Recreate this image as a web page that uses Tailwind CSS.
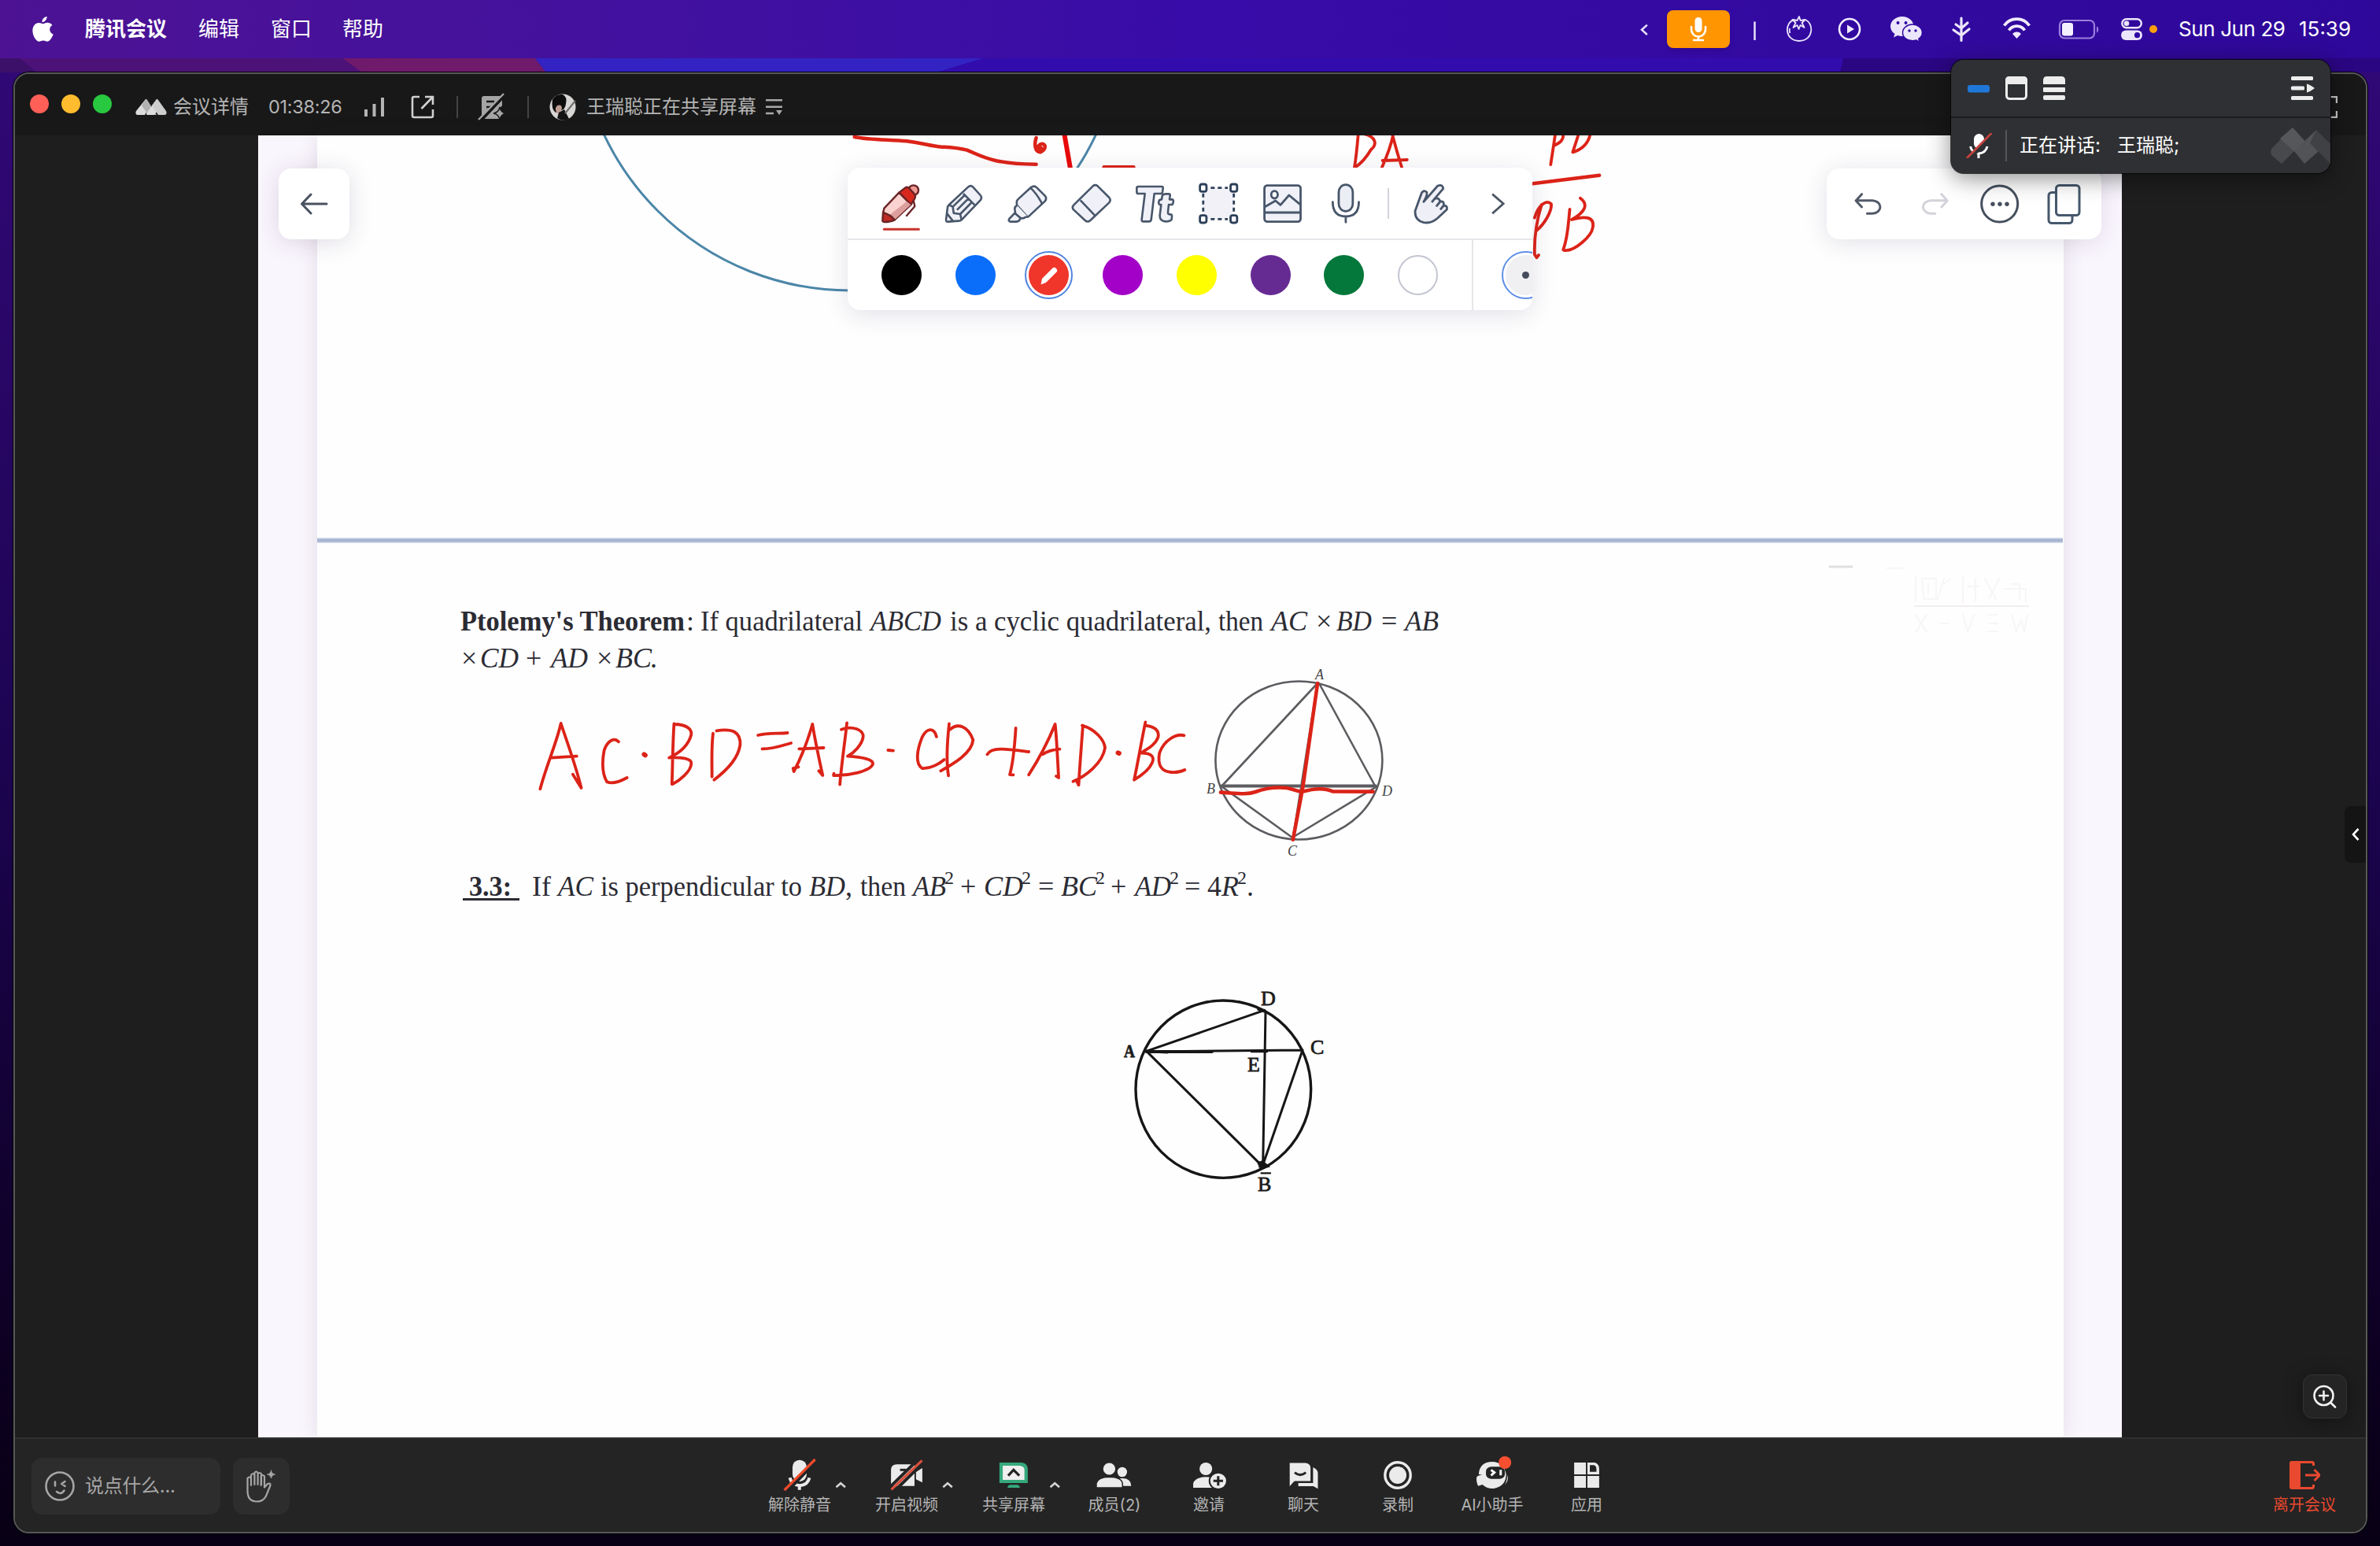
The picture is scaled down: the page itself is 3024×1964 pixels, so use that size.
<!DOCTYPE html>
<html lang="zh-CN">
<head>
<meta charset="utf-8">
<title>腾讯会议</title>
<script src="https://cdn.jsdelivr.net/npm/@tailwindcss/browser@4"></script>
</head>
<body class="relative flex h-[1964px] w-[3024px] flex-col overflow-hidden bg-linear-to-b from-[#33097a] via-[#1c0450] to-[#080014] font-['Inter','Noto_Sans_CJK_SC',sans-serif]">

<!-- Menu bar -->
<header class="flex h-[74px] shrink-0 items-center bg-linear-to-r from-[#4d1294] via-[#380ca8] to-[#2e0899] pl-[41px] text-[26px] leading-none text-white">
  <svg class="h-[33px] w-[27px]" viewBox="0 0 27 33" fill="#fff"><path d="M18.600 0c.3 3.600-2.700 7.300-6.100 7.100C12.100 3.600 15.300.3 18.600 0zM13.700 9.200c1.300 0 3.300-1.600 6-1.400 2.300.1 4.400 1.200 5.700 3.100-4.800 3-4 9.600 1.300 11.600-1 3.200-4.300 9.300-7.700 9.300-2 0-2.700-1.200-5.100-1.200s-3.200 1.200-5.100 1.200C4.700 31.800.5 24.400.4 18.300.3 11.900 4.200 8 8.300 8c2.300 0 4 1.200 5.400 1.200z"/></svg>
  <span class="ml-10 w-[104px] whitespace-nowrap font-bold">腾讯会议</span>
  <span class="ml-10 w-[52px]">编辑</span>
  <span class="ml-10 w-[52px]">窗口</span>
  <span class="ml-[39px] w-[52px]">帮助</span>
  <div class="ml-auto flex h-[74px] w-[954px] items-center [&_svg_*]:[vector-effect:non-scaling-stroke]">
    <svg class="h-[74px] w-[48px]" viewBox="32.200 0 77.300 222" preserveAspectRatio="none" fill="none" stroke="#e9e2fb" stroke-width="2.500"><path d="M69 95L58 113.500L69 132"/></svg>
    <div class="h-12 w-20 rounded-lg bg-[#ff9500] shadow-md">
      <svg class="h-12 w-20" viewBox="0 0 80 48" fill="none" stroke="#fff" stroke-width="2.600" stroke-linecap="round"><rect x="35.500" y="9" width="9" height="19" rx="4.500" fill="#fff" stroke="none"/><path d="M31 21v3.500a9 9 0 0 0 18 0V21M40 33.500V38M34 38h12"/></svg>
    </div>
    <svg class="h-[74px] w-[62px]" viewBox="0 0 62 74"><path d="M31.500 27.500v23.500" stroke="#e9e2fb" stroke-width="2.500"/></svg>
    <svg class="h-[74px] w-[60px]" viewBox="0 0 60 74" fill="none" stroke="#e9e2fb" stroke-width="1.800" stroke-linejoin="round"><path d="M20 25C7 28 7 52 26 52C45 52 45 28 33 25"/><path d="M26 21l1.500 5 6-1-4 4 3 6-5-3-2 5-2-5-5 3 3-6-4-4 6 1z"/><path d="M14 36c-.5 2-.4 4 .3 6"/></svg>
    <svg class="h-[74px] w-[60px]" viewBox="0 0 60 74" fill="none" stroke="#f1ecfd" stroke-width="2.600"><circle cx="30" cy="37" r="13"/><path d="M27 31.500v11l9-5.500z" fill="#f1ecfd" stroke="none"/></svg>
    <svg class="h-[74px] w-[80px]" viewBox="0 0 80 74"><path d="M37 21c-8.500 0-15 5.600-15 12.500 0 4 2.200 7.300 5.500 9.600L26 47.500l5-2.500c2 .6 4 .9 6 .9 8 0 14.500-5.600 14.500-12.400S45 21 37 21z" fill="#ece6fc"/><circle cx="31.500" cy="29" r="2" fill="#3009a2"/><circle cx="41.500" cy="29" r="2" fill="#3009a2"/><path d="M50 31c-7 0-12.500 4.700-12.500 10.400S43 51.800 50 51.800c1.700 0 3.300-.3 4.800-.8l4.200 2.300-1.200-4c2.800-1.900 4.600-4.700 4.600-7.900C62.400 35.700 57 31 50 31z" fill="#ece6fc" stroke="#3009a2" stroke-width="1.500"/><circle cx="46" cy="39" r="1.700" fill="#3009a2"/><circle cx="54" cy="39" r="1.700" fill="#3009a2"/></svg>
    <svg class="h-[74px] w-[70px]" viewBox="0 0 70 74" fill="none" stroke="#ece6fc" stroke-width="3.200" stroke-linecap="round"><path d="M32 23v28.500M32 36l8-7M32 36l-7-5M32 45l10-8M32 45l-10-7"/></svg>
    <svg class="h-[74px] w-[70px]" viewBox="0 0 70 74" fill="none" stroke="#f1ecfd" stroke-width="3.800"><path d="M16.500 32.500a19.500 19.500 0 0 1 32 0M22.500 38.500a12 12 0 0 1 20 0"/><path d="M32.500 49l-5.500-6a7.500 7.500 0 0 1 11 0z" fill="#f1ecfd" stroke="none"/></svg>
    <svg class="h-[74px] w-[80px]" viewBox="0 0 80 74"><rect x="17" y="26" width="44" height="22.500" rx="6" fill="none" stroke="#9c80dd" stroke-width="2.200"/><rect x="20" y="29" width="14" height="16.500" rx="3" fill="#f4f0fe"/><path d="M64 33.500c3 1 3 7 0 8z" fill="#9c80dd"/></svg>
    <svg class="h-[74px] w-[80px]" viewBox="0 0 80 74"><rect x="16.300" y="24.300" width="24.500" height="11" rx="5.500" fill="none" stroke="#ece6fc" stroke-width="2.400"/><circle cx="22" cy="29.800" r="3.300" fill="#ece6fc"/><rect x="15" y="38.500" width="27" height="12.500" rx="6.200" fill="#ece6fc"/><circle cx="35.500" cy="44.700" r="3.600" fill="#3009a2"/><circle cx="56" cy="37" r="5" fill="#ff9f0a"/></svg>
    <span class="ml-[8px] w-[137px] whitespace-nowrap tracking-[-.4px]">Sun Jun 29</span><span class="ml-4 whitespace-nowrap">15:39</span>
  </div>
</header>

<!-- Wallpaper strip below the menu bar -->
<svg class="block h-[18px] w-full shrink-0" viewBox="0 74 3024 18"><rect y="74" width="3024" height="18" fill="#2e0a9a"/><path d="M0 74h25l22 18H0z" fill="#3c1068"/><path d="M25 74h410l25 18H47z" fill="#4d1278"/><path d="M435 74h245l14 18H460z" fill="#701a6c"/><path d="M680 74h570l-60 18H694z" fill="#3323c2"/><path d="M1250 74h1092l-4 18H1190z" fill="#320cac"/><path d="M2342 74h682v18h-686z" fill="#2b0683"/></svg>

<!-- Meeting window -->
<main class="ml-[17px] flex h-[1856px] w-[2991px] shrink-0 flex-col overflow-hidden rounded-[20px] border-2 border-[#58585b] bg-[#1e1e1e] shadow-[0_0_0_1px_#000]">

  <!-- Title bar -->
  <div class="flex h-[78px] shrink-0 items-center bg-[#181818] pl-[19px] pt-[6px] text-2xl leading-none text-[#b4b4b4]">
    <div class="flex gap-4 pb-[8px]"><i class="size-6 rounded-full bg-[#ff5f57]"></i><i class="size-6 rounded-full bg-[#febc2e]"></i><i class="size-6 rounded-full bg-[#28c840]"></i></div>
    <svg class="ml-[30px] h-5 w-10" viewBox="0 0 40 20"><path d="M13 0L1 15q-2 5 3 5h8L19 8z" fill="#dcdcdc"/><path d="M13 0q1-.5 2 .8L27 20h-8q-3 0-4.500-2.500L8 8z" fill="#b2b2b2"/><path d="M27 0L14 18q-1 2 3 2h7l7-9z" fill="#dcdcdc"/><path d="M27 0q1-.3 2 1l10 14q2 5-3 5h-7L21 8z" fill="#cdcdcd"/></svg>
    <span class="ml-2 w-[97px] whitespace-nowrap">会议详情</span>
    <span class="ml-6 w-[122px] whitespace-nowrap text-[23.500px] tracking-[-.3px]">01:38:26</span>
    <svg class="h-6 w-[26px]" viewBox="0 0 26 24" fill="#b4b4b4"><rect y="15" width="4" height="9"/><rect x="10.500" y="8" width="4" height="16"/><rect x="21" width="4" height="24"/></svg>
    <svg class="ml-[33px] h-[30px] w-[30px]" viewBox="0 0 30 30" fill="none" stroke="#d0d0d0" stroke-width="2.600"><path d="M11 2H4a2 2 0 0 0-2 2v22a2 2 0 0 0 2 2h22a2 2 0 0 0 2-2v-8M18 2h10v10M28 2L13.500 17"/></svg>
    <i class="ml-[28px] h-7 w-0.5 bg-[#444]"></i>
    <svg class="ml-[25px] h-9 w-9" viewBox="0 0 36 36"><path d="M5 7a3 3 0 0 1 3-3h20a3 3 0 0 1 3 3v9l-4 5-2 7 3 5H5z" fill="#a5a5a5"/><path d="M11 11h10M11 18h6" stroke="#181818" stroke-width="2.600"/><path d="M28 18q1.500 7 8 8-6.500 1-8 8-1.500-7-8-8 6.500-1 8-8z" fill="#a5a5a5" stroke="#181818" stroke-width="1.500"/><path d="M36 1L3 36" stroke="#181818" stroke-width="4"/><path d="M33 1L1 34" stroke="#a5a5a5" stroke-width="2.400"/></svg>
    <i class="ml-[27px] h-7 w-0.5 bg-[#444]"></i>
    <svg class="ml-[26px] h-[34px] w-[34px] overflow-visible" viewBox="0 0 34 34"><circle cx="17" cy="17" r="16.500" fill="#d8d6d4"/><path d="M4 7Q9 0 17 1Q23 4 21 13Q20 20 15 21L8 24Q2 20 4 7z" fill="#0e0d0d"/><path d="M10 15q6-2 6 4l-4 7q-5-3-4-8z" fill="#bd9d92"/><path d="M12 24l7-4 6 12q-8 4-15-1z" fill="#151414"/><path d="M33 9L20 25" stroke="#6e6c6a" stroke-width="2"/></svg>
    <span class="ml-[13px] w-[216px] whitespace-nowrap">王瑞聪正在共享屏幕</span>
    <svg class="ml-[12px] h-5 w-[22px]" viewBox="0 0 22 20"><path d="M0 1.300h21M0 9.800h21M0 18h10" stroke="#a8a8a8" stroke-width="2.400"/><path d="M13 14h8l-4 6z" fill="#a8a8a8"/></svg>
    <svg class="ml-auto mr-9 h-7 w-7" viewBox="0 0 28 28" fill="none" stroke="#ccc" stroke-width="2.400"><path d="M1 9V1h8M19 1h8v8M27 19v8h-8M9 27H1v-8"/></svg>
  </div>

  <!-- Shared screen -->
  <section class="relative flex h-[1654px] shrink-0">
    <div class="relative ml-[309px] flex h-full w-[2368px] shrink-0 bg-[#faf6fd]">
      <div class="ml-[75px] h-full w-[2219px] bg-[#fefefe] shadow-[0_0_24px_rgba(60,50,80,0.13)]"></div>

      <!-- Whiteboard content: printed text, figures and ink -->
      <svg class="absolute inset-0 h-full w-full [&_*]:[vector-effect:non-scaling-stroke]" viewBox="328 172 2368 1654" fill="none" stroke-linecap="round" stroke-linejoin="round">
        <circle cx="1080" cy="23.400" r="345.600" stroke="#4b86a8" stroke-width="3"/>
        <path d="M403 686.500H2621" stroke="#d3deee" stroke-width="7" stroke-linecap="butt"/>
        <path d="M403 686.500H2621" stroke="#a6b4d0" stroke-width="4" stroke-linecap="butt"/>

        <g stroke="#f8f5f8" stroke-width="2">
          <path d="M2325 720H2353" stroke="#e2dfe2" stroke-width="3"/>
          <path d="M2433 770H2577" stroke="#f1edf1"/>
          <path d="M2434 733V764M2442 735h18v26h-16zM2450 742v12M2470 735l-8 26M2478 735l-10 8M2494 733v32M2500 745h14M2510 735v28M2522 735l14 26M2540 735l-12 24M2546 748h28v16M2556 742h10v20M2434 781l14 22M2448 781l-14 22M2466 792h10M2494 781l6 22 8-22M2526 781h12M2528 792h10M2526 802h12M2556 781l6 22 6-16 4 16 4-22M2398 722h20"/>
        </g>

        <g fill="#2b2b33" font-family="'Liberation Serif',serif" font-size="36">
          <text x="585" y="801" font-weight="bold" textLength="285" lengthAdjust="spacingAndGlyphs">Ptolemy's Theorem</text>
          <text x="872" y="801">:</text>
          <text x="890" y="801" textLength="206" lengthAdjust="spacingAndGlyphs">If quadrilateral</text>
          <text x="1106" y="801" font-style="italic" textLength="90" lengthAdjust="spacingAndGlyphs">ABCD</text>
          <text x="1207" y="801" textLength="332" lengthAdjust="spacingAndGlyphs">is a cyclic quadrilateral,</text>
          <text x="1548" y="801" textLength="57" lengthAdjust="spacingAndGlyphs">then</text>
          <text x="1615" y="801" font-style="italic" textLength="46" lengthAdjust="spacingAndGlyphs">AC</text>
          <text x="1672" y="801">×</text>
          <text x="1698" y="801" font-style="italic" textLength="45" lengthAdjust="spacingAndGlyphs">BD</text>
          <text x="1755" y="801">=</text>
          <text x="1785" y="801" font-style="italic" textLength="43" lengthAdjust="spacingAndGlyphs">AB</text>
          <text x="586" y="848">×</text>
          <text x="610" y="848" font-style="italic" textLength="49" lengthAdjust="spacingAndGlyphs">CD</text>
          <text x="668" y="848">+</text>
          <text x="700" y="848" font-style="italic" textLength="47" lengthAdjust="spacingAndGlyphs">AD</text>
          <text x="758" y="848">×</text>
          <text x="782" y="848" font-style="italic" textLength="46" lengthAdjust="spacingAndGlyphs">BC</text>
          <text x="826" y="848">.</text>
          <text x="596" y="1138" font-weight="bold" textLength="54" lengthAdjust="spacingAndGlyphs">3.3:</text>
          <text x="676" y="1138">If</text>
          <text x="709" y="1138" font-style="italic" textLength="45" lengthAdjust="spacingAndGlyphs">AC</text>
          <text x="763" y="1138" textLength="256" lengthAdjust="spacingAndGlyphs">is perpendicular to</text>
          <text x="1028" y="1138" font-style="italic" textLength="46" lengthAdjust="spacingAndGlyphs">BD</text>
          <text x="1074" y="1138">,</text>
          <text x="1093" y="1138" textLength="58" lengthAdjust="spacingAndGlyphs">then</text>
          <text x="1160" y="1138" font-style="italic" textLength="42" lengthAdjust="spacingAndGlyphs">AB</text>
          <text x="1220" y="1138">+</text>
          <text x="1250" y="1138" font-style="italic" textLength="50" lengthAdjust="spacingAndGlyphs">CD</text>
          <text x="1319" y="1138">=</text>
          <text x="1348" y="1138" font-style="italic" textLength="46" lengthAdjust="spacingAndGlyphs">BC</text>
          <text x="1411" y="1138">+</text>
          <text x="1442" y="1138" font-style="italic" textLength="46" lengthAdjust="spacingAndGlyphs">AD</text>
          <text x="1505" y="1138">=</text>
          <text x="1534" y="1138">4</text>
          <text x="1552" y="1138" font-style="italic">R</text>
          <text x="1584" y="1138">.</text>
          <g font-size="24"><text x="1200" y="1123">2</text><text x="1298" y="1123">2</text><text x="1392" y="1123">2</text><text x="1486" y="1123">2</text><text x="1572" y="1123">2</text></g>
        </g>
        <path d="M588 1142.500H660" stroke="#2b2b33" stroke-width="3" stroke-linecap="butt"/>

        <!-- Cyclic quadrilateral -->
        <g stroke="#5c5c60" stroke-width="2.600">
          <ellipse cx="1650.400" cy="966" rx="106" ry="100.500"/>
          <path d="M1674 868L1552 999L1642 1064L1748 1000L1676 868M1674 868L1643 1064"/>
          <path d="M1552 998.500H1748" stroke-width="4"/>
        </g>
        <g fill="#444" font-family="'Liberation Serif',serif" font-style="italic" font-size="18"><text x="1671" y="863">A</text><text x="1533" y="1008">B</text><text x="1756" y="1011">D</text><text x="1636" y="1087">C</text></g>

        <!-- Perpendicular chords -->
        <g transform="translate(1380 1220) scale(.33333)" stroke="#161616" stroke-width="3.400">
          <ellipse cx="523" cy="491" rx="334" ry="338"/>
          <path d="M230 346L680 190M230 346L672 785M672 785L825 342M684 195L674 785M230 348L825 342" stroke-width="3"/>
          <path d="M230 348H480M232 346L310 350" stroke-width="3.800"/>
          <path d="M655 770L672 764L700 786L664 797z" fill="#161616" stroke-width="1"/>
          <path d="M655 187L680 196M630 348H690M668 811H702" stroke-width="2.400"/>
        </g>
        <g fill="#1c1c1c" stroke="#1c1c1c" stroke-width=".8" font-family="'Liberation Serif',serif" font-size="26"><text x="1602" y="1277">D</text><text x="1428" y="1343" font-size="24" font-weight="bold" textLength="14" lengthAdjust="spacingAndGlyphs">A</text><text x="1665" y="1339">C</text><text x="1585" y="1361">E</text><text x="1598" y="1513">B</text></g>

        <!-- Red ink -->
        <g stroke="#dc2318" stroke-width="3.800">
          <g transform="translate(560 740) scale(.44643 .33333)">
            <path d="M342 537C330 610 300 700 283 787M342 537C360 610 385 700 400 783L376 731M314 668L387 662"/>
            <path d="M506 607C495 590 475 600 465 640C458 690 460 730 473 760C490 770 515 755 530 744"/>
            <path d="M579 655L582 658" stroke-width="6"/>
            <path d="M664 538C660 620 660 700 658 768M664 540C700 540 715 560 713 580C705 620 680 650 650 668C680 665 715 670 713 690C712 720 680 755 660 768"/>
            <path d="M775 575C770 630 772 690 772 740M785 565C830 555 855 570 852 620C845 680 800 730 778 752"/>
            <path d="M903 582C930 572 960 577 987 573M915 634C945 635 975 620 997 612"/>
            <path d="M1058 540C1045 600 1025 670 1005 720L1003 708L1018 703M1058 540C1065 600 1078 680 1087 735L1076 718M1020 634L1090 630"/>
            <path d="M1156 535C1150 610 1140 700 1136 770M1140 560C1170 545 1205 560 1202 590C1198 620 1175 650 1158 662C1200 665 1232 675 1230 692C1222 720 1160 737 1118 735L1119 728"/>
            <path d="M1273 639L1288 641"/>
            <path d="M1411 588C1405 555 1385 550 1370 590C1355 640 1350 690 1370 708C1395 710 1420 690 1433 675"/>
            <path d="M1447 538C1442 600 1438 680 1445 736M1450 560C1470 535 1500 545 1515 600C1512 650 1460 690 1423 718"/>
          </g>
          <g transform="translate(1200 740) scale(.44643 .33333)">
            <path d="M122 655C135 625 180 635 240 645M203 555C200 620 195 690 186 732L196 733"/>
            <path d="M240 733C270 670 300 590 315 540C320 600 322 680 325 744L318 738M280 655C295 640 310 637 328 635"/>
            <path d="M394 545C390 620 385 700 382 772L376 756M392 545C430 560 455 600 457 630C450 690 400 740 366 758"/>
            <path d="M494 649L497 651" stroke-width="6"/>
            <path d="M572 532C560 610 550 690 540 752M572 545C600 550 612 565 608 590C600 620 575 635 560 650C590 650 600 665 590 690C580 720 555 740 540 752"/>
            <path d="M682 583C660 575 625 600 612 650C605 700 620 720 645 723C660 725 675 720 684 714"/>
            <path d="M1062 384L1020 780L992 980M786 800C830 803 860 810 885 798C920 780 950 780 975 783C1000 790 1005 798 1020 797C1050 785 1080 782 1105 796L1220 797" stroke-width="4.600"/>
          </g>
          <g transform="translate(1050 160) scale(.63776 .33333)">
            <path d="M56 42C85 53 125 52 160 58C195 66 205 76 230 80C250 82 258 82 280 92C310 115 330 145 418 146" stroke-width="4.500"/>
            <path d="M418 45C414 70 415 98 426 100C438 90 438 70 430 68C422 70 419 85 421 96L428 84" stroke-width="4.500"/>
            <path d="M474 30L486 162" stroke="#e8080a" stroke-width="6"/>
            <path d="M553 157H612" stroke-width="4.500"/>
            <path d="M1060 20C1058 70 1056 110 1052 160M1070 30C1095 40 1098 70 1085 90C1076 120 1064 145 1052 160M1130 20C1128 60 1118 110 1106 162M1128 36C1134 80 1140 120 1147 162M1108 132L1157 129"/>
            <path d="M1453 20C1450 60 1446 110 1443 147M1466 25C1472 50 1462 65 1449 75M1500 20C1496 50 1490 80 1487 100C1505 90 1520 65 1522 25"/>
            <path d="M1407 220L1540 188" stroke-width="4.500"/>
            <path d="M1425 300C1415 360 1410 430 1411 490L1415 502L1419 492M1411 350C1418 300 1435 280 1444 297C1446 325 1430 375 1415 398"/>
            <path d="M1481 318C1478 370 1478 420 1468 472M1502 275C1520 300 1510 330 1485 357C1515 340 1530 350 1527 385C1525 420 1490 480 1470 474"/>
          </g>
        </g>
      </svg>

      <!-- Back -->
      <button class="absolute left-[26px] top-[42px] flex size-[90px] items-center justify-center rounded-2xl bg-white shadow-[0_4px_30px_rgba(60,40,90,0.16)]">
        <svg class="h-7 w-9" viewBox="0 0 36 28" fill="none" stroke="#4a5260" stroke-width="3" stroke-linecap="round" stroke-linejoin="round"><path d="M34 14H2.500M14 2L2.500 14L14 26"/></svg>
      </button>

      <!-- Drawing tools -->
      <div class="absolute left-[749px] top-[41px] h-[181px] w-[870px] overflow-hidden rounded-2xl bg-white">
        <div class="flex h-[92px] border-b-2 border-[#e6e6ea] pl-[27px] [&_svg]:h-[91px] [&_svg]:shrink-0 [&_svg_*]:[vector-effect:non-scaling-stroke]">
          <svg class="w-[81px]" viewBox="-18 -27 243 273" stroke="#6b2426" stroke-width="2.400" stroke-linejoin="round"><circle cx="152" cy="59" r="19" fill="#ef9a94"/><path d="M97 68L120 50Q128 44 136 52L156 74Q162 82 156 92L142 114z" fill="#d8271d"/><path d="M97 68L142 114L80 172L62 164L36 146L40 128z" fill="#fad2cf"/><path d="M142 114L126 102L54 158L80 172z" fill="#dd9f9e" stroke="none"/><path d="M36 144Q64 152 80 172Q66 180 40 180Q33 180 34 172z" fill="#bf2a24"/><path d="M152 98L157 120L124 158" fill="none"/><path d="M40 208H172" stroke="#c8342b" stroke-width="3" stroke-linecap="round"/></svg>
          <svg class="w-[81px]" viewBox="225 -27 243 273" fill="#f0f1f8" stroke="#48566a" stroke-width="2.600" stroke-linejoin="round"><path d="M360 47Q370 38 379 47L407 78Q415 87 407 97L335 172Q331 176 324 176L284 179Q276 180 276 172L282 124Q283 119 288 114z"/><path d="M342 72L385 115M288 115L302 122L305 146L330 150L335 172M302 122L347 78M318 134L360 92M330 150L374 105M280 148L302 176" fill="none"/></svg>
          <svg class="w-[81px]" viewBox="468 -27 243 273" fill="#f0f1f8" stroke="#48566a" stroke-width="2.600" stroke-linejoin="round"><path d="M600 48Q612 39 622 49L653 80Q662 90 653 101L592 158Q588 162 584 158L548 118Q544 112 546 100Q547 96 552 92z"/><path d="M598 50Q622 72 642 110" fill="none"/><path d="M547 117Q536 122 538 132L541 150L560 165Q572 168 578 162L588 160"/><path d="M538 146L517 168Q512 178 522 179H544Q556 178 560 165z"/></svg>
          <svg class="w-[81px]" viewBox="711 -27 243 273" fill="#f0f1f8" stroke="#48566a" stroke-width="2.600" stroke-linejoin="round"><path d="M836 43Q845 36 854 43L898 87Q906 96 898 106L826 174Q816 183 806 174L763 134Q754 125 763 115z"/><path d="M788 97L846 158" fill="none"/></svg>
          <svg class="w-[81px]" viewBox="954 -27 243 273" fill="#f0f1f8" stroke="#48566a" stroke-width="2.600" stroke-linejoin="round"><path d="M1009 45H1098Q1104 45 1103 52L1101 66Q1100 72 1094 72H1070L1058 172Q1057 178 1050 178H1028Q1021 178 1022 170L1034 72H1009Q1003 72 1003 65V51Q1003 45 1009 45z"/><path d="M1112 73H1125Q1131 73 1130 79L1128 94H1138Q1144 95 1142 105Q1141 114 1136 114H1125L1122 142Q1121 152 1130 151Q1138 150 1137 160L1136 170Q1130 178 1112 178Q1090 176 1091 155L1096 114H1091Q1085 112 1087 102Q1088 94 1098 94L1100 82Q1101 74 1112 73z"/></svg>
          <svg class="w-[81px]" viewBox="720 160 127 273" preserveAspectRatio="none" fill="none" stroke="#2d3f58" stroke-width="2.800"><path d="M750 236H812V356H750z" fill="#f1f1f7" stroke="none"/><path d="M766 237H800M766 356H800" stroke-dasharray="5 4"/><path d="M751 258V336M812 258V336" stroke-dasharray="5 4"/><g fill="#fff"><rect x="744.500" y="223" width="13" height="28" rx="4" ry="8"/><rect x="805.500" y="223" width="13" height="28" rx="4" ry="8"/><rect x="744.500" y="342" width="13" height="28" rx="4" ry="8"/><rect x="805.500" y="342" width="13" height="28" rx="4" ry="8"/></g></svg>
          <svg class="w-[81px]" viewBox="847 160 127 273" preserveAspectRatio="none" fill="#f0f1f8" stroke="#48566a" stroke-width="2.800" stroke-linejoin="round"><rect x="873" y="228" width="72" height="138" rx="6" ry="10"/><path d="M874 331H944M874 309L895 286L905 302L922 265L944 300" fill="none"/><ellipse cx="893" cy="263" rx="6.500" ry="14" fill="#fff"/></svg>
          <svg class="w-[81px]" viewBox="974 160 127 273" preserveAspectRatio="none" fill="#eceef6" stroke="#48566a" stroke-width="2.800" stroke-linecap="round"><rect x="1021" y="225" width="28" height="101" rx="14" ry="28"/><path d="M1009 291Q1009 345 1035 346Q1061 345 1061 291M1035 348V368" fill="none"/></svg>
          <svg class="w-[25px]" viewBox="0 0 25 91"><path d="M12 26V65" stroke="#d4d4da" stroke-width="2"/></svg>
          <svg class="w-[81px]" viewBox="1140 160 127 273" preserveAspectRatio="none" fill="#eff0f7" stroke="#48566a" stroke-width="2.800" stroke-linejoin="round"><path d="M1190 290L1218 229Q1228 222 1229 240L1212 278Q1220 272 1223 289Q1231 286 1230 304Q1238 304 1236 320L1218 352Q1205 374 1190 369Q1172 360 1173 325L1186 256Q1190 244 1196 253Q1198 265 1190 290z"/><path d="M1212 278L1206 292M1223 289L1215 308M1230 304L1223 320" fill="none"/></svg>
          <svg class="w-[89px]" viewBox="1267 160 140 273" preserveAspectRatio="none" fill="none" stroke="#4d5564" stroke-width="2.800"><path d="M1327 261L1349 297L1327 335"/></svg>
        </div>
        <div class="flex h-[89px] items-center pl-[43px] *:shrink-0">
          <i class="size-[51px] rounded-full bg-black"></i>
          <i class="ml-[43px] size-[51px] rounded-full bg-[#0a6efa]"></i>
          <span class="ml-[37px] flex size-[61px] items-center justify-center rounded-full border-2 border-[#5184df]"><span class="flex size-[51px] items-center justify-center rounded-full bg-[#f0352a]"><svg class="size-[26px]" viewBox="0 0 26 26" fill="#fff"><path d="M18 3q2-1 4 1t1 4L9 22l-6.500 2.500L4 17z"/></svg></span></span>
          <i class="ml-[38px] size-[51px] rounded-full bg-[#a300c8]"></i>
          <i class="ml-[43px] size-[51px] rounded-full bg-[#ffff00]"></i>
          <i class="ml-[43px] size-[51px] rounded-full bg-[#662b93]"></i>
          <i class="ml-[42px] size-[51px] rounded-full bg-[#04773b]"></i>
          <i class="ml-[43px] size-[51px] rounded-full border-2 border-[#c3c5d0] bg-white"></i>
          <div class="ml-[43px] flex h-full items-center border-l-2 border-[#e6e6ea] pl-[36px]">
            <span class="flex size-[61px] shrink-0 items-center justify-center rounded-full border-2 border-[#5f8fe8]"><span class="flex size-[51px] items-center justify-center rounded-full bg-[#f0f0f3]"><i class="size-[9px] rounded-full bg-[#454b5a]"></i></span></span>
          </div>
        </div>
      </div>
      <div class="pointer-events-none absolute left-[749px] top-[41px] h-[181px] w-[870px] rounded-2xl shadow-[0_6px_30px_rgba(60,40,90,0.14)]"></div>

      <!-- History and page tools -->
      <div class="absolute left-[1993px] top-[42px] flex h-[90px] w-[349px] rounded-2xl bg-white pl-[10px] shadow-[0_4px_30px_rgba(60,40,90,0.14)] [&_svg]:h-[90px] [&_svg_*]:[vector-effect:non-scaling-stroke]">
        <svg class="w-[86px]" viewBox="452.400 642 138.500 270" preserveAspectRatio="none" fill="none" stroke="#525a68" stroke-width="3" stroke-linecap="round" stroke-linejoin="round"><path d="M508 740L496 765L508 789M496 764H530C551 768 551 810 530 814H519"/></svg>
        <svg class="w-[84px]" viewBox="590.800 642 135.200 270" preserveAspectRatio="none" fill="none" stroke="#d3d3da" stroke-width="3" stroke-linecap="round" stroke-linejoin="round"><path d="M671 740L683 765L671 789M683 764H649C628 768 628 810 649 814H658"/></svg>
        <svg class="w-[80px]" viewBox="0 0 80 90" fill="none" stroke="#46505f" stroke-width="3"><circle cx="39.700" cy="45" r="23"/><g fill="#46505f" stroke="none"><circle cx="31" cy="45.200" r="2.700"/><circle cx="40" cy="45.200" r="2.700"/><circle cx="49" cy="45.200" r="2.700"/></g></svg>
        <svg class="w-[82px]" viewBox="0 0 82 90" fill="#fff" stroke="#46586c" stroke-width="3"><rect x="22" y="30.500" width="30" height="39" rx="4"/><rect x="31.500" y="21.500" width="29.500" height="38" rx="4"/></svg>
      </div>
    </div>

    <!-- Side drawer handle -->
    <button class="absolute right-0 top-[852px] flex h-[72px] w-[27px] items-center justify-center rounded-l-lg bg-[#141414]"><svg class="h-4 w-2.5" viewBox="0 0 10 16" fill="none" stroke="#fff" stroke-width="2.600"><path d="M8.500 1L2 8l6.500 7"/></svg></button>
    <!-- Zoom -->
    <button class="absolute right-6 top-[1574px] flex size-14 items-center justify-center rounded-xl border border-[#333] bg-[#242424] shadow-[0_2px_24px_rgba(0,0,0,0.4)]"><svg class="size-[30px]" viewBox="0 0 30 30" fill="none" stroke="#f2f2f2" stroke-width="2.600" stroke-linecap="round"><circle cx="13.500" cy="14" r="12"/><path d="M22.500 23l5.500 5.500M13.500 8.500v11M8 14h11"/></svg></button>
  </section>

  <!-- Control bar -->
  <footer class="relative flex h-[120px] shrink-0 items-start border-t-2 border-[#303030] bg-[#242424] pl-[21px] pt-[20px] text-xl leading-6 text-[#b4b4b4]">
    <div class="mt-1 flex h-[72px] w-[240px] items-center rounded-[14px] bg-[#2d2d2d] pl-[17px]">
      <svg class="size-[38px]" viewBox="0 0 38 38" fill="none" stroke="#a6a6a6" stroke-width="2.600" stroke-linecap="round"><circle cx="19" cy="19" r="17.500"/><path d="M13 13.500v5M25.500 13l-4 3 4 3M15 26q6 4.500 9.500-1.500"/></svg>
      <span class="ml-[13px] whitespace-nowrap text-2xl leading-none tracking-[-.3px] text-[#a6a6a6]">说点什么...</span>
    </div>
    <div class="ml-4 mt-1 flex size-[72px] items-center justify-center rounded-[14px] bg-[#2d2d2d]">
      <svg class="h-[42px] w-[40px]" viewBox="315 1866 40 42" fill="none" stroke="#a6a6a6" stroke-width="2.200" stroke-linecap="round" stroke-linejoin="round"><path d="M322 1886V1877q-2.300-3-4.500 0V1893q0 13.500 12 13.500 8 0 11.500-7l5.500-13.500q.5-3.500-3.500-2l-4 4.500V1874.500q-2.200-3-4.300 0V1886M322 1886V1873q2.200-3.500 4.400 0V1885M326.400 1885V1870q2.200-3 4.200 0V1885M330.600 1885V1871.500q2.200-3 4.400 0V1885"/><path d="M347.500 1867q.5 4.500 5 5-4.500.5-5 5-.5-4.500-5-5 4.500-.5 5-5z" fill="#a6a6a6" stroke-width=".8"/></svg>
    </div>

    <nav class="ml-[580px] flex [&_a]:flex [&_a]:flex-col [&_a]:items-center [&_a]:gap-1 [&_a]:whitespace-nowrap [&_svg]:h-12 [&_svg]:overflow-visible [&_svg_*]:[vector-effect:non-scaling-stroke]">
      <a class="w-[136px]"><svg class="w-[136px]" viewBox="20.900 84 355.400 144" preserveAspectRatio="none" fill="none"><rect x="175" y="104" width="47" height="82" rx="23" ry="27" fill="#ebebeb"/><path d="M166 172Q172 200 199 202Q226 199 231 172M198 200V218" stroke="#ebebeb" stroke-width="4"/><path d="M244 118L160 218" stroke="#242424" stroke-width="5"/><path d="M250 102L148 219" stroke="#f04a2a" stroke-width="3.200"/><path d="M320 208L335 193L350 208" stroke="#d5d5d5" stroke-width="2.600"/></svg>解除静音</a>
      <a class="w-[136px]"><svg class="w-[136px]" viewBox="376.300 84 355.400 144" preserveAspectRatio="none" fill="none"><path d="M502 203V140Q503 122 521 121H580V203zM585 150L606 135V190L585 178z" fill="#ebebeb"/><path d="M532 142H552" stroke="#242424" stroke-width="3"/><path d="M606 118L514 222M596 98L500 206" stroke="#242424" stroke-width="4"/><path d="M605 106L503 217" stroke="#d9503c" stroke-width="3.200"/><path d="M675 208L690 193L705 208" stroke="#d5d5d5" stroke-width="2.600"/></svg>开启视频</a>
      <a class="w-[136px]"><svg class="w-[136px]" viewBox="731.700 84 355.400 144" preserveAspectRatio="none" fill="none"><path d="M862 114H937Q956 118 956 138V192H862z" fill="#35a97c"/><path d="M873 126H930Q945 129 945 142V180H873z" fill="#efefef"/><path d="M891 164L909 142L928 164" stroke="#242424" stroke-width="3.200"/><path d="M889 210Q890 199 898 199H920Q929 200 930 210z" fill="#35a97c"/><path d="M1031 208L1046 193L1061 208" stroke="#d5d5d5" stroke-width="2.600"/></svg>共享屏幕</a>
      <a class="w-[120px]"><svg class="w-[60px]" viewBox="1166.800 84 156.800 144" preserveAspectRatio="none" fill="#ebebeb"><ellipse cx="1271" cy="150" rx="16" ry="19"/><path d="M1262 175Q1300 170 1301 203H1275z"/><ellipse cx="1228" cy="138" rx="22" ry="25" stroke="#242424" stroke-width="1.500"/><path d="M1185 210V193Q1190 170 1228 169Q1268 170 1272 193V210z" stroke="#242424" stroke-width="1.500"/></svg>成员(2)</a>
      <a class="w-[120px]"><svg class="w-[60px]" viewBox="15.700 84 156.800 144" preserveAspectRatio="none" fill="#ebebeb"><ellipse cx="84" cy="138" rx="21" ry="24"/><path d="M42 210V193Q48 170 84 169Q110 170 122 180V210z"/><ellipse cx="125" cy="184" rx="29" ry="32" stroke="#242424" stroke-width="2"/><path d="M109 184H141M125 166V202" stroke="#242424" stroke-width="3"/></svg>邀请</a>
      <a class="w-[120px]"><svg class="w-[60px]" viewBox="329.300 84 156.800 144" preserveAspectRatio="none" fill="#ebebeb"><path d="M440 132Q455 140 456 153V214L441 204H391V192H440z"/><path d="M361 114H415Q433 117 433 136V186H378L361 208z" stroke="#242424" stroke-width="1"/><path d="M379 152Q397 170 416 152" fill="none" stroke="#242424" stroke-width="3"/></svg>聊天</a>
      <a class="w-[120px]"><svg class="w-[60px]" viewBox="0 0 60 48"><circle cx="30" cy="26" r="16.200" fill="none" stroke="#ebebeb" stroke-width="3.400"/><circle cx="30" cy="26" r="11" fill="#ebebeb"/></svg>录制</a>
      <a class="w-[120px]"><svg class="w-[60px]" viewBox="956.500 84 156.800 144" preserveAspectRatio="none" fill="#ebebeb"><path d="M990 158Q993 112 1035 111Q1075 112 1081 160Q1080 205 1040 213Q1015 214 1003 198L988 203Q981 185 983 170Q986 162 1002 161z"/><path d="M1084 160Q1092 180 1077 199Q1086 180 1084 160z"/><rect x="1014" y="130" width="63" height="46" rx="18" fill="#242424"/><path d="M1031 142L1042 152L1031 163M1063 142V163" fill="none" stroke="#fff" stroke-width="3"/><ellipse cx="1077" cy="114" rx="21" ry="24" fill="#f84f30"/></svg>AI小助手</a>
      <a class="w-[120px]"><svg class="w-[60px]" viewBox="1270.100 84 156.800 144" preserveAspectRatio="none" fill="#ebebeb"><path d="M1307 114H1346V159H1307zM1307 165H1346V210H1307zM1351 165H1390V210H1351zM1351 114H1375Q1390 118 1390 138V159H1351zM1359 124V149H1381V140Q1381 126 1372 124z" fill-rule="evenodd"/></svg>应用</a>
    </nav>

    <a class="ml-auto mr-[38px] flex flex-col items-center gap-1 text-[#e8492f]"><svg class="h-12 w-[40px]" viewBox="2909 1848 40 48" fill="none" stroke="#e8492f" stroke-width="3"><path d="M2911.500 1857.500H2939Q2940.500 1857.500 2940.500 1859.500V1862M2940.500 1886V1888.500Q2940.500 1890.500 2938.500 1890.500H2912"/><path d="M2913 1856H2924V1892H2913Q2910 1892 2910 1889V1859Q2910 1856 2913 1856z" fill="#e8492f" stroke="none"/><path d="M2930 1874H2948M2941.500 1867L2948.500 1874L2941.500 1881"/></svg>离开会议</a>
  </footer>
</main>

<!-- Floating speaker panel -->
<aside class="absolute left-[2479px] top-[76px] flex h-[144px] w-[482px] flex-col overflow-hidden rounded-2xl bg-[#2f3033] shadow-[0_6px_30px_rgba(0,0,0,0.45)] ring-1 ring-black/70">
  <div class="flex h-[74px] shrink-0 items-center justify-between border-b-2 border-[#1b1c1e] pl-[21px] pr-5">
    <svg class="h-[30px] w-[124px]" viewBox="0 0 124 30"><rect y="11" width="28" height="9.500" rx="3" fill="#1f78d8"/><rect x="49.500" y="1.500" width="25" height="27" rx="4" fill="none" stroke="#ededed" stroke-width="3"/><path d="M48 10V5q0-5 5-5h18q5 0 5 5v5z" fill="#ededed"/><g fill="#ededed"><path d="M96 10V5q0-5 5-5h18q5 0 5 5v5z"/><rect x="96" y="14" width="28" height="6" rx="1"/><rect x="96" y="24" width="28" height="6" rx="2"/></g></svg>
    <svg class="h-[30px] w-[30px]" viewBox="0 0 30 30" fill="#ededed"><rect width="28" height="5" rx="1.500"/><rect y="12.500" width="17" height="5" rx="1.500"/><rect y="25" width="28" height="5" rx="1.500"/><path d="M20 9.500q4 1 10 5.500-6 4.500-10 5.500z"/></svg>
  </div>
  <div class="flex flex-1 items-center text-2xl leading-none text-white">
    <svg class="ml-[19px] h-8 w-[34px]" viewBox="0 0 34 32" fill="none"><rect x="10" y="1" width="13" height="19" rx="6.500" fill="#fff"/><path d="M5.500 17q2 8.500 10.500 9 9-.5 11-9M16 26v6" stroke="#fff" stroke-width="3"/><path d="M33 3L4 34" stroke="#2f3033" stroke-width="4"/><path d="M32.500 0L1 32" stroke="#c8423c" stroke-width="2.600"/></svg>
    <i class="ml-4 h-10 w-0.5 bg-[#55565a]"></i>
    <span class="ml-4 w-[124px] whitespace-nowrap">正在讲话:</span><span class="whitespace-nowrap">王瑞聪;</span>
    <svg class="ml-auto h-[46px] w-[78px]" viewBox="0 0 78 46"><path d="M30 0L3 27q-2 5 1 9l12 10 17-17z" fill="#48494c"/><path d="M30 0l20 22-16 10L14 14z" fill="#56575a"/><path d="M60 3L32 30l13 16 18-16z" fill="#525356"/><path d="M60 3l18 18v25L52 20z" fill="#404144"/></svg>
  </div>
</aside>
</body>
</html>
